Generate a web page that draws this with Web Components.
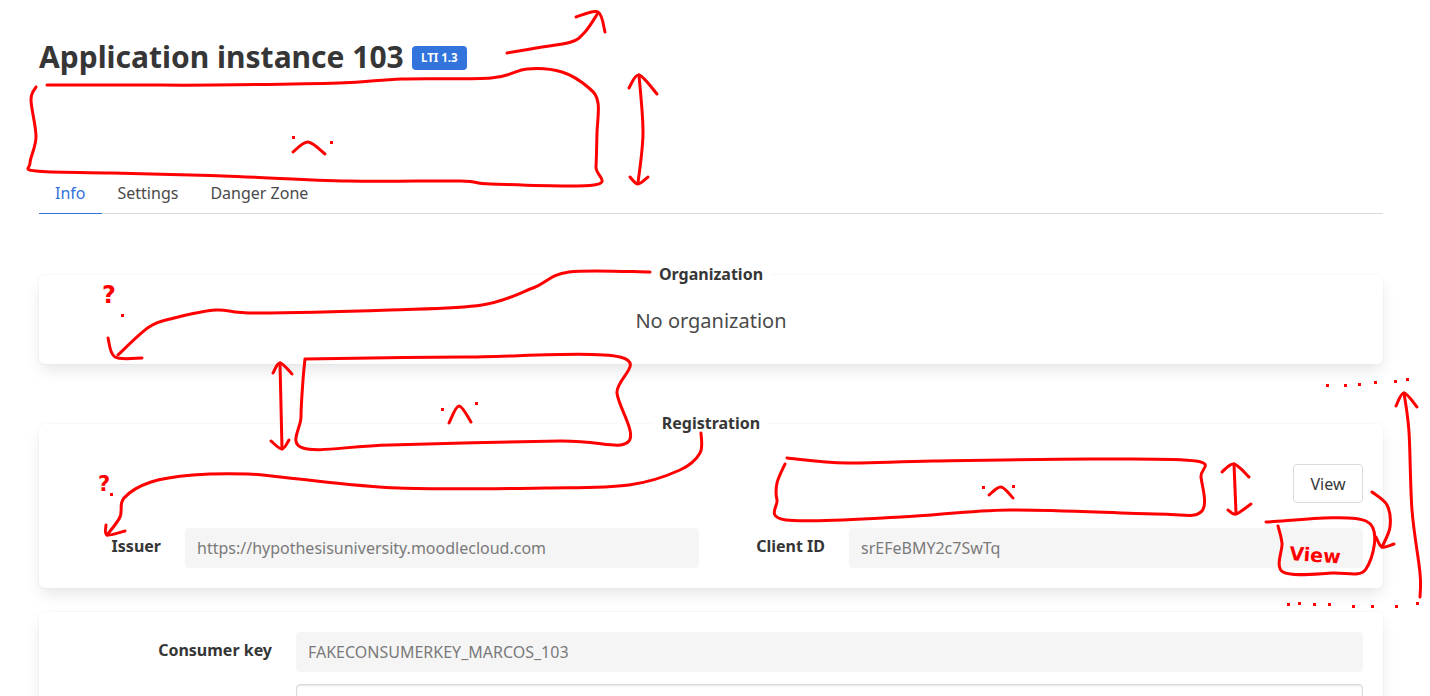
<!DOCTYPE html>
<html lang="en">
<head>
<meta charset="utf-8">
<title>Application instance 103</title>
<style>
  html, body { margin: 0; height: 100%; overflow: hidden; background: #fff; }
  body { font-family: "Noto Sans", "Open Sans", sans-serif; color: #4a4a4a; }
</style>
</head>
<body>
<app-page>
  <page-title>Application instance 103<lti-tag slot="tag">LTI 1.3</lti-tag></page-title>
  <tab-bar>
    <tab-item active>Info</tab-item>
    <tab-item>Settings</tab-item>
    <tab-item>Danger Zone</tab-item>
  </tab-bar>

  <field-card legend="Organization" style="margin-top:61px">
    <empty-note>No organization</empty-note>
  </field-card>

  <field-card legend="Registration" style="margin-top:60px">
    <card-actions><view-button>View</view-button></card-actions>
    <field-columns>
      <form-field label="Issuer" value="https://hypothesisuniversity.moodlecloud.com" label-width="102"></form-field>
      <form-field label="Client ID" value="srEFeBMY2c7SwTq" label-width="102"></form-field>
    </field-columns>
  </field-card>

  <field-card style="margin-top:24px">
    <form-field label="Consumer key" value="FAKECONSUMERKEY_MARCOS_103" label-width="213"></form-field>
    <form-field label="Shared secret" label-width="213" editable style="margin-top:12px"></form-field>
  </field-card>
</app-page>
<red-scribbles></red-scribbles>

<script>
function define(name, css, html, setup) {
  customElements.define(name, class extends HTMLElement {
    constructor() {
      super();
      this.attachShadow({ mode: 'open' }).innerHTML = `<style>${css}</style>${html}`;
    }
    connectedCallback() {
      if (setup) setup(this, this.shadowRoot);
    }
  });
}

define('app-page', `
  :host { display: block; padding: 38px 47px 0 39px; }
`, `<slot></slot>`);

define('page-title', `
  :host { display: flex; align-items: center; gap: 8px; height: 36px;
    font-size: 30px; font-weight: 700; color: #363636; white-space: nowrap; }
`, `<slot></slot><slot name="tag"></slot>`);

define('lti-tag', `
  :host { display: inline-flex; align-items: center; justify-content: center;
    width: 55px; height: 24px; margin-top: 3px; border-radius: 4px;
    background: #3273dc; color: #fff; font-size: 11.5px; font-weight: 700; }
`, `<slot></slot>`);

define('tab-bar', `
  :host { display: flex; margin-top: 101px; border-bottom: 1px solid #dbdbdb; }
`, `<slot></slot>`);

define('tab-item', `
  :host { display: block; padding: 0 16px; height: 38px; line-height: 36px;
    font-size: 16px; color: #4a4a4a; margin-bottom: -1px; border-bottom: 1px solid transparent; }
  :host([active]) { color: #3273dc; border-bottom-color: #3273dc; }
`, `<slot></slot>`);

define('field-card', `
  :host { display: block; position: relative; padding: 20px; background: #fff; border-radius: 6px;
    box-shadow: 0 8px 16px -2px rgba(10,10,10,.1), 0 0 0 1px rgba(10,10,10,.02); }
  .legend { position: absolute; left: 0; right: 0; top: -12px; display: flex; justify-content: center;
    font-size: 16px; font-weight: 700; color: #363636; line-height: 22px; }
  .legend span { background: #fff; padding: 0 8px; }
  .legend span:empty { display: none; }
`, `<div class="legend"><span></span></div><slot></slot>`, (el, root) => {
  root.querySelector('span').textContent = el.getAttribute('legend') || '';
});

define('empty-note', `
  :host { display: block; padding: 6px 0 3px; text-align: center; font-size: 20px; line-height: 40px; color: #4a4a4a; }
`, `<slot></slot>`);

define('card-actions', `
  :host { display: flex; justify-content: flex-end; padding-top: 20px; margin-bottom: 25px; }
`, `<slot></slot>`);

define('view-button', `
  :host { display: inline-flex; align-items: center; justify-content: center; box-sizing: border-box;
    width: 70px; height: 39px; border: 1px solid #dbdbdb; border-radius: 4px; background: #fff;
    color: #363636; font-size: 16px; }
`, `<slot></slot>`);

define('field-columns', `
  :host { display: grid; grid-template-columns: 1fr 1fr; gap: 24px; }
`, `<slot></slot>`);

define('form-field', `
  :host { display: grid; column-gap: 24px; align-items: start; }
  label { text-align: right; font-size: 16px; font-weight: 700; color: #363636; line-height: 24px; padding-top: 6px; white-space: nowrap; }
  .input { box-sizing: border-box; height: 40px; padding: 0 12px; border-radius: 4px; background: #f5f5f5;
    color: #7a7a7a; font-size: 16px; line-height: 40px; white-space: nowrap; overflow: hidden; }
  :host([editable]) .input { background: #fff; border: 1px solid #dbdbdb; box-shadow: inset 0 1px 2px rgba(10,10,10,.1); }
`, `<label></label><div class="input"></div>`, (el, root) => {
  el.style.gridTemplateColumns = `${el.getAttribute('label-width')}px 1fr`;
  root.querySelector('label').textContent = el.getAttribute('label');
  root.querySelector('.input').textContent = el.getAttribute('value') || '';
});

// the red marker drawn over the screenshot
const strokes = [
  [[507,53],[536,48],[571,42],[585,32],[598,13]],
  [[576,17],[598,12],[605,32]],
  [[47,85],[134,85],[214,85],[339,83],[402,79],[491,78],[527,69],[562,72],[589,88],[598,103],[597,133],[596,167],[594,185],[491,184],[460,181],[348,181],[223,176],[112,173],[36,171],[30,163],[36,137],[31,100],[36,87]],
  [[293,152],[308,142],[325,154]],
  [[639,75],[643,133],[638,183]],
  [[629,88],[639,75],[657,94]],
  [[630,177],[638,184],[648,177]],
  [[650,272],[569,272],[533,288],[482,305],[390,310],[257,313],[216,310],[174,318],[149,327],[118,355]],
  [[108,338],[115,357],[142,358]],
  [[305,359],[464,357],[620,357],[617,393],[628,442],[560,441],[390,445],[303,448],[301,417],[303,380],[305,359]],
  [[449,423],[459,406],[471,422]],
  [[280,363],[282,449]],
  [[273,373],[280,363],[292,374]],
  [[271,441],[282,449],[289,440]],
  [[701,433],[700,453],[680,470],[629,485],[546,488],[399,488],[289,478],[248,474],[193,475],[151,482],[124,498],[120,517],[107,535]],
  [[106,525],[107,535],[125,531]],
  [[787,458],[847,463],[933,461],[1091,459],[1196,461],[1201,477],[1201,512],[1155,514],[1010,510],[901,517],[786,520],[777,500],[777,483],[785,464]],
  [[989,495],[1001,487],[1013,498]],
  [[1234,464],[1236,513]],
  [[1222,472],[1234,464],[1249,477]],
  [[1228,510],[1236,514],[1251,504]],
  [[1372,492],[1387,505],[1390,527],[1382,547]],
  [[1376,537],[1382,547],[1394,544]],
  [[1266,522],[1366,521],[1366,569],[1333,573],[1283,572],[1282,543],[1278,526]],
  [[1404,393],[1409,432],[1412,510],[1420,573],[1420,597]],
  [[1396,406],[1404,393],[1417,407]]
];
const dots = [[293,137],[331,142],[442,409],[476,403],[983,487],[1013,486],[122,315],[111,494],
  [1288,604],[1299,603],[1314,604],[1329,604],[1353,606],[1372,606],[1396,606],[1417,603],
  [1327,385],[1345,385],[1359,384],[1375,382],[1395,381],[1407,379]];

function smooth(p) {
  let d = `M${p[0][0]} ${p[0][1]}`;
  for (let i = 0; i < p.length - 1; i++) {
    const a = p[i - 1] || p[i], b = p[i], c = p[i + 1], e = p[i + 2] || c;
    d += `C${b[0] + (c[0] - a[0]) / 6} ${b[1] + (c[1] - a[1]) / 6} ${c[0] - (e[0] - b[0]) / 6} ${c[1] - (e[1] - b[1]) / 6} ${c[0]} ${c[1]}`;
  }
  return d;
}

define('red-scribbles', `
  :host { position: absolute; left: 0; top: 0; width: 1430px; height: 696px; pointer-events: none; }
  svg { display: block; }
  path { fill: none; stroke: #f00; stroke-width: 3; stroke-linecap: round; stroke-linejoin: round; }
  rect { fill: #f00; }
  text { fill: #f00; font-family: "DejaVu Sans", sans-serif; font-weight: 700; }
`, `<svg width="1430" height="696" viewBox="0 0 1430 696">
  <g id="marks"></g>
  <text x="102" y="303" font-size="24">?</text>
  <text x="98" y="491" font-size="21">?</text>
  <text x="1289" y="560" font-size="19" transform="rotate(4 1289 560)">View</text>
</svg>`, (el, root) => {
  root.getElementById('marks').innerHTML =
    strokes.map(s => `<path d="${smooth(s)}"/>`).join('') +
    dots.map(d => `<rect x="${d[0] - 1}" y="${d[1] - 1}" width="3" height="3"/>`).join('');
});
</script>
</body>
</html>
